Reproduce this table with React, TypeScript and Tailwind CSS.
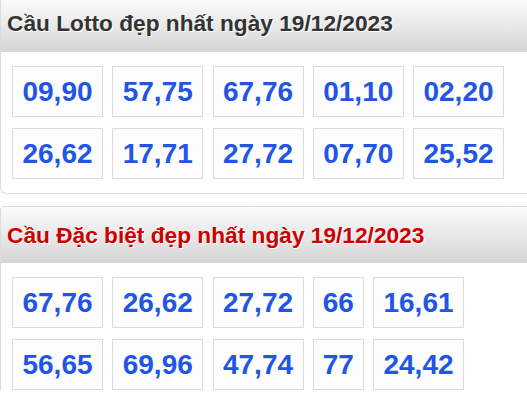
import React from "react";

const lotto = [
  ["09,90", "57,75", "67,76", "01,10", "02,20"],
  ["26,62", "17,71", "27,72", "07,70", "25,52"],
];
const db = [
  ["67,76", "26,62", "27,72", "66", "16,61"],
  ["56,65", "69,96", "47,74", "77", "24,42"],
];

function Box({ v }: { v: string }) {
  return (
    <div
      className={`${v.length > 2 ? "w-[91px]" : "w-[51px]"} h-[51px] border border-[#dcdcdc] bg-[#fdfdfd] flex items-center justify-center text-[28px] leading-[32px] font-bold text-[#2255e6]`}
    >
      {v}
    </div>
  );
}

function Rows({ rows }: { rows: string[][] }) {
  return (
    <div className="flex flex-col gap-[11px] pl-[11px]">
      {rows.map((r, i) => (
        <div key={i} className="flex gap-[9.25px]">
          {r.map((v, j) => (
            <Box key={j} v={v} />
          ))}
        </div>
      ))}
    </div>
  );
}

export default function App() {
  return (
    <div
      className="w-[527px] h-[396px] overflow-hidden bg-white"
      style={{ fontFamily: '"Liberation Sans", Arial, sans-serif' }}
    >
      <div className="border-l border-b border-[#dcdcdc] rounded-bl-[6px] pb-[14px]">
        <div className="h-[52px] pl-[6px] pt-[10px] bg-[linear-gradient(#fbfbfb,#d5d5d5)]">
          <div className="text-[22.7px] leading-[26px] font-bold text-[#333333] [text-shadow:1px_1px_0_#ffffff] whitespace-nowrap">
            Cầu Lotto đẹp nhất ngày 19/12/2023
          </div>
        </div>
        <div className="pt-[14px]">
          <Rows rows={lotto} />
        </div>
      </div>
      <div className="mt-[12px] border-l border-t border-[#dcdcdc] rounded-tl-[4px]">
        <div className="h-[56px] pl-[6px] pt-[15px] bg-[linear-gradient(#fbfbfb,#d5d5d5)]">
          <div className="text-[22.7px] leading-[26px] font-bold text-[#cc0000] [text-shadow:1px_1px_0_#ffffff] whitespace-nowrap">
            Cầu Đặc biệt đẹp nhất ngày 19/12/2023
          </div>
        </div>
        <div className="pt-[14px]">
          <Rows rows={db} />
        </div>
      </div>
    </div>
  );
}
